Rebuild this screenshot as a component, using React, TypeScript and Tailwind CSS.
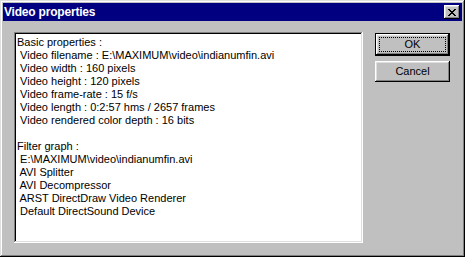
import React from 'react';

const lines = [
  'Basic properties :',
  ' Video filename : E:\\MAXIMUM\\video\\indianumfin.avi',
  ' Video width : 160 pixels',
  ' Video height : 120 pixels',
  ' Video frame-rate : 15 f/s',
  ' Video length : 0:2:57 hms / 2657 frames',
  ' Video rendered color depth : 16 bits',
  '',
  'Filter graph :',
  ' E:\\MAXIMUM\\video\\indianumfin.avi',
  ' AVI Splitter',
  ' AVI Decompressor',
  ' ARST DirectDraw Video Renderer',
  ' Default DirectSound Device',
];

const raised =
  'shadow-[inset_-1px_-1px_#000,inset_1px_1px_#fff,inset_-2px_-2px_#808080,inset_2px_2px_#dfdfdf]';

export default function App() {
  return (
    <div
      className="w-[465px] h-[257px] bg-[#c0c0c0] p-[3px] flex flex-col shadow-[inset_-1px_-1px_#000,inset_1px_1px_#dfdfdf,inset_-2px_-2px_#808080,inset_2px_2px_#fff] text-black"
      style={{ fontFamily: '"Liberation Sans", Arial, sans-serif' }}
    >
      {/* title bar */}
      <div className="h-[18px] bg-[#000080] flex items-center justify-between pl-[1px] pr-[2px]">
        <span className="text-white font-bold text-[12px] tracking-[-0.2px] leading-none">Video properties</span>
        <button className={`w-[16px] h-[14px] bg-[#c0c0c0] flex items-center justify-center ${raised}`}>
          <svg width="8" height="7" viewBox="0 0 8 7" shapeRendering="crispEdges">
            <path
              d="M0 0h2v1h-2zM6 0h2v1h-2zM1 1h2v1h-2zM5 1h2v1h-2zM2 2h4v1h-4zM3 3h2v1h-2zM2 4h4v1h-4zM1 5h2v1h-2zM5 5h2v1h-2zM0 6h2v1h-2zM6 6h2v1h-2z"
              fill="#000"
            />
          </svg>
        </button>
      </div>

      {/* body */}
      <div className="flex flex-1 pl-[11px] pt-[11px] gap-[12px]">
        <div className="w-[349px] h-[211px] bg-white shadow-[inset_-1px_-1px_#fff,inset_1px_1px_#808080,inset_-2px_-2px_#dfdfdf,inset_2px_2px_#000] pt-[4px] pl-[3px] text-[11px] leading-[13px]">
          {lines.map((l, i) => (
            <div key={i} className="whitespace-pre h-[13px]">
              {l}
            </div>
          ))}
        </div>

        <div className="flex flex-col gap-[5px] pt-[1px]">
          <button className="w-[75px] h-[23px] bg-[#c0c0c0] border border-black p-0">
            <div className={`w-full h-full flex items-center justify-center p-[3px] ${raised}`}>
              <div className="w-full h-full border border-dotted border-black flex items-center justify-center text-[11px] leading-none">
                OK
              </div>
            </div>
          </button>
          <button className={`w-[75px] h-[21px] bg-[#c0c0c0] flex items-center justify-center text-[11px] leading-none ${raised}`}>
            Cancel
          </button>
        </div>
      </div>
    </div>
  );
}
